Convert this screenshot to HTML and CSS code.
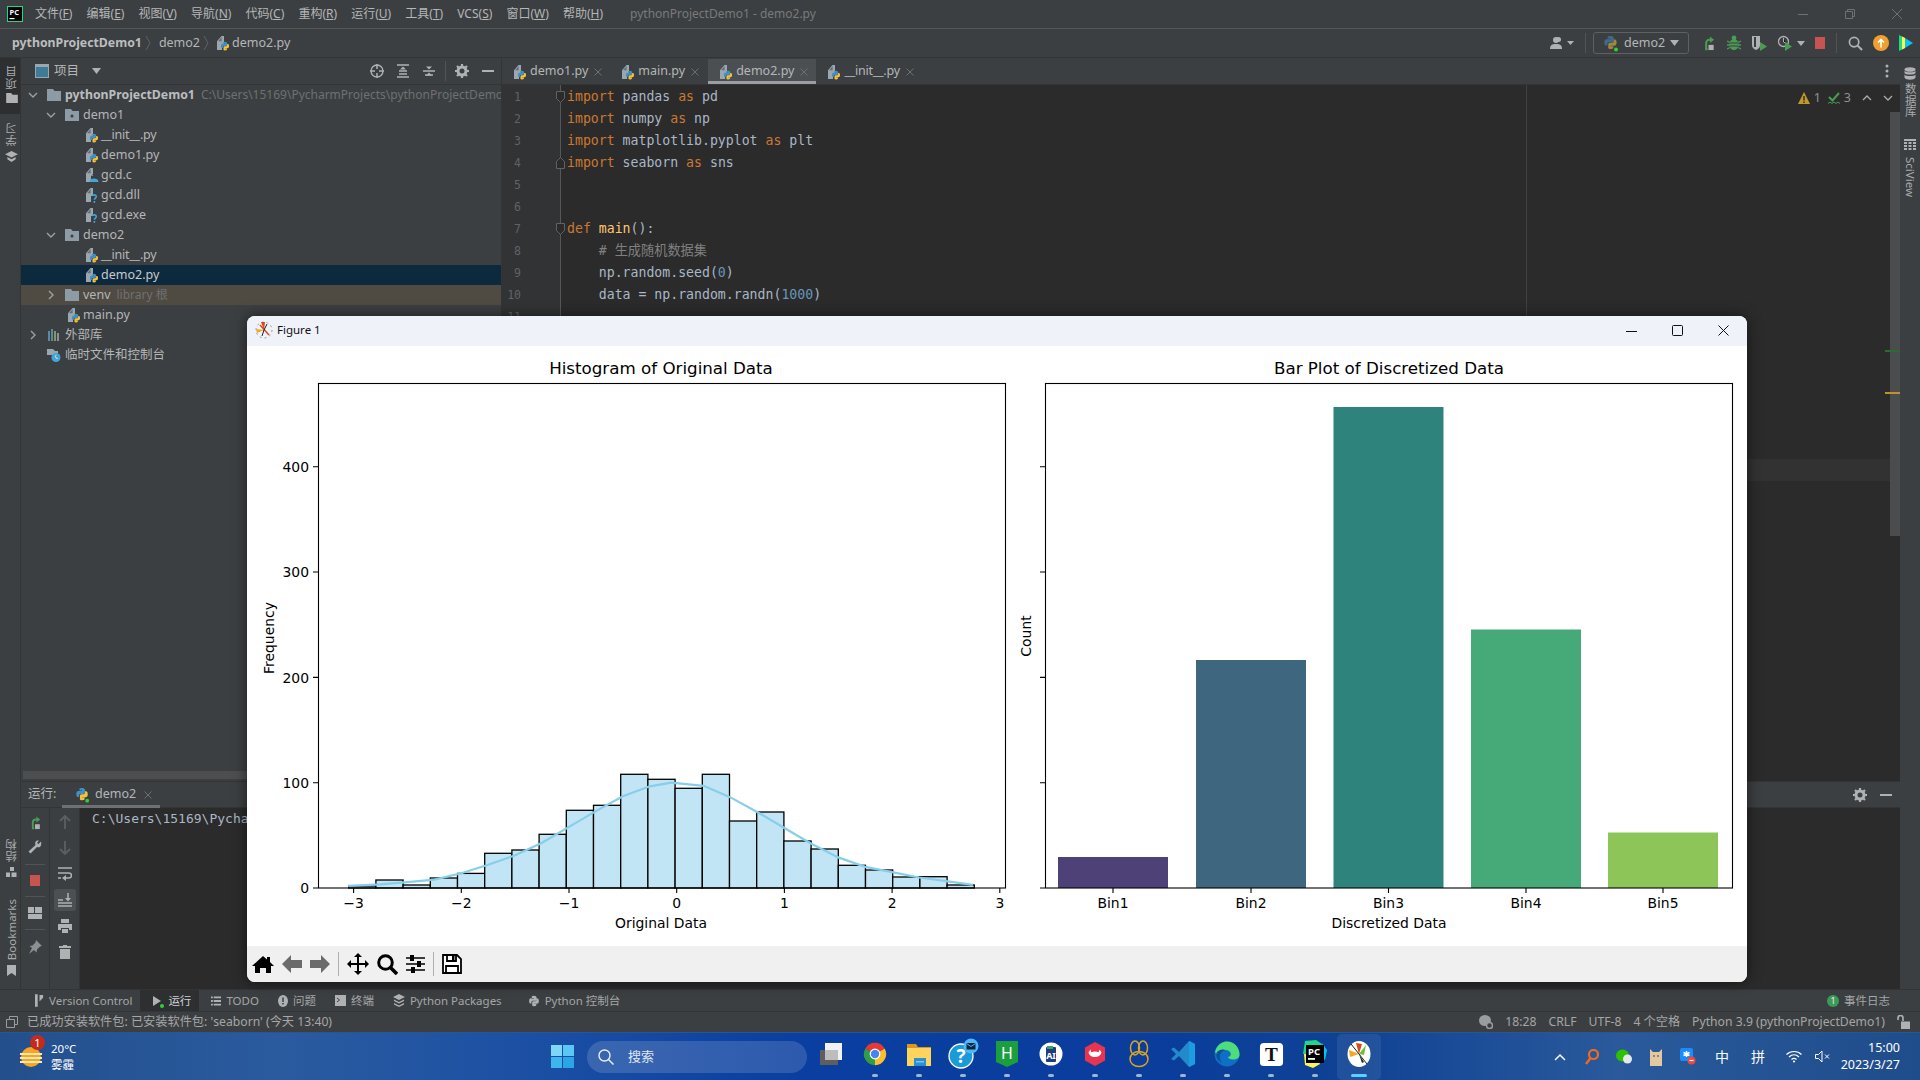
FILE: index.html
```html
<!DOCTYPE html>
<html lang="zh">
<head>
<meta charset="utf-8">
<title>pythonProjectDemo1 - demo2.py</title>
<link rel="stylesheet" href="styles.css">
</head>
<body>
<svg class="defs" width="0" height="0">
  <symbol id="pylogo" viewBox="0 0 16 16">
    <path fill="#3f8fc9" d="M7.9 1C4.8 1 5 2.3 5 2.3V4h3v.5H3.7S1.5 4.3 1.5 7.9s1.9 3.4 1.9 3.4h1.2V9.7s-.1-1.9 1.9-1.9h3.1s1.8 0 1.8-1.8V3S11 1 7.9 1z"/>
    <path fill="#f2c33b" d="M8.1 15c3.1 0 2.9-1.3 2.9-1.3V12H8v-.5h4.3s2.2.2 2.2-3.4-1.9-3.4-1.9-3.4h-1.2v1.6s.1 1.9-1.9 1.9H7.4s-1.8 0-1.8 1.8v3S5 15 8.1 15z"/>
  </symbol>
  <symbol id="doc" viewBox="0 0 14 16">
    <path fill="#9aa7b0" d="M1 6.2 5.5 1H8v8H6v6H1z"/>
    <path fill="#3c3f41" d="M5.6 2v4.2H2.2z" opacity=".55"/>
  </symbol>
  <symbol id="pyfile" viewBox="0 0 14 16">
    <use href="#doc" width="14" height="16"/>
    <use href="#pylogo" x="4" y="6" width="10" height="10"/>
  </symbol>
  <symbol id="cfile" viewBox="0 0 14 16">
    <use href="#doc" width="14" height="16"/>
    <circle cx="9" cy="9.500" r="2.400" fill="none" stroke="#3c3f41" stroke-width=".5"/>
    <path fill="#3fa7dc" d="M4.500 15c0-2.600 2-3.600 4.500-3.600s4.500 1 4.500 3.600z"/>
  </symbol>
  <symbol id="qfile" viewBox="0 0 14 16">
    <use href="#doc" width="14" height="16"/>
    <path fill="none" stroke="#3fa7dc" stroke-width="1.600" d="M7.300 9c.4-1.600 4-1.600 4 .5 0 1.600-1.900 1.500-1.900 3.300"/>
    <rect x="8.600" y="14" width="1.600" height="1.800" fill="#3fa7dc"/>
  </symbol>
  <symbol id="folder" viewBox="0 0 14 14">
    <path fill="#8d9ba6" d="M0 1h6l1.500 2H14v10H0z"/>
    <circle cx="7" cy="8" r="1.500" fill="#3c3f41"/>
  </symbol>
  <symbol id="folderplain" viewBox="0 0 14 14">
    <path fill="#8d9ba6" d="M0 1h6l1.500 2H14v10H0z"/>
  </symbol>
  <symbol id="down" viewBox="0 0 12 12"><path fill="none" stroke="#9da0a2" stroke-width="1.400" d="M2 4l4 4 4-4"/></symbol>
  <symbol id="right" viewBox="0 0 12 12"><path fill="none" stroke="#9da0a2" stroke-width="1.400" d="M4 2l4 4-4 4"/></symbol>
  <symbol id="x" viewBox="0 0 10 10"><path fill="none" stroke="#6d7072" stroke-width="1" d="M1.500 1.500l7 7M8.500 1.500l-7 7"/></symbol>
  <symbol id="rerun" viewBox="0 0 16 16">
    <path fill="none" stroke="#499c54" stroke-width="2.200" d="M7 14.500H5.500V8A3.500 3.500 0 0 1 9 4.500h1"/>
    <path fill="#499c54" d="M9.500 1v7l4.500-3.500z"/>
    <rect x="8" y="10" width="5.500" height="5.500" fill="#afb1b3"/>
  </symbol>
  <symbol id="play" viewBox="0 0 10 12"><path fill="#afb1b3" d="M1 1l8 5-8 5z"/></symbol>
</svg>

<div class="menubar">
  <svg class="pc-logo" viewBox="0 0 16 16" width="16" height="16"><rect x=".5" y=".5" width="15" height="15" fill="#000" stroke="#21d789"/><text x="2.500" y="8.500" class="pc-t">PC</text><rect x="2.500" y="12" width="5" height="1.200" fill="#fff"/></svg>
  <nav class="menu">
    <span>文件(<u>F</u>)</span><span>编辑(<u>E</u>)</span><span>视图(<u>V</u>)</span><span>导航(<u>N</u>)</span><span>代码(<u>C</u>)</span><span>重构(<u>R</u>)</span><span>运行(<u>U</u>)</span><span>工具(<u>T</u>)</span><span>VCS(<u>S</u>)</span><span>窗口(<u>W</u>)</span><span>帮助(<u>H</u>)</span>
  </nav>
  <span class="app-title">pythonProjectDemo1 - demo2.py</span>
  <div class="winctl">
    <svg viewBox="0 0 12 12" width="12" height="12"><path stroke="#6e7072" d="M1 6.500h10"/></svg>
    <svg viewBox="0 0 12 12" width="12" height="12"><path fill="none" stroke="#6e7072" d="M1.500 3.500h7v7h-7zM3.500 3.500v-2h7v7h-2"/></svg>
    <svg viewBox="0 0 12 12" width="12" height="12"><path stroke="#6e7072" d="M1 1l10 10M11 1L1 11"/></svg>
  </div>
</div>

<div class="navbar">
  <b class="crumb-root">pythonProjectDemo1</b>
  <svg class="crumb-sep" viewBox="0 0 6 16" width="6" height="16"><path fill="none" stroke="#5f6264" d="M1 1l4 7-4 7"/></svg>
  <span>demo2</span>
  <svg class="crumb-sep sep2" viewBox="0 0 6 16" width="6" height="16"><path fill="none" stroke="#5f6264" d="M1 1l4 7-4 7"/></svg>
  <svg class="ficon tall" width="14" height="16"><use href="#pyfile"/></svg>
  <span class="crumb-file">demo2.py</span>
  <div class="nav-right">
    <svg viewBox="0 0 24 14" width="24" height="14"><circle cx="6" cy="4" r="3" fill="#afb1b3"/><path fill="#afb1b3" d="M0 13c0-4 2-5 6-5s6 1 6 5z"/><circle cx="8.500" cy="3.500" r="2.500" fill="#afb1b3"/><path fill="#afb1b3" d="M17 5h7l-3.500 4z"/></svg>
    <i class="nav-sep"></i>
    <div class="runcfg">
      <svg width="16" height="17" viewBox="0 0 16 17"><use href="#pylogo" width="15" height="15" opacity=".55"/><circle cx="13" cy="14.500" r="2" fill="#2bd62b"/></svg>
      <span>demo2</span>
      <svg width="9" height="6" viewBox="0 0 9 6"><path fill="#afb1b3" d="M0 0h9L4.500 6z"/></svg>
    </div>
    <svg class="tool-run" width="15" height="16"><use href="#rerun"/></svg>
    <svg class="tool-bug" viewBox="0 0 14 16" width="14" height="16"><ellipse cx="7" cy="9.500" rx="4.500" ry="5.500" fill="#499c54"/><circle cx="7" cy="3" r="2.400" fill="#499c54"/><path stroke="#499c54" stroke-width="1.300" d="M0 6l3 1.500M14 6l-3 1.500M0 10h3M14 10h-3M0 14l3-1.500M14 14l-3-1.500"/><path stroke="#3c3f41" d="M3 8h8M3 11h8"/></svg>
    <svg viewBox="0 0 16 16" width="16" height="16"><path fill="#afb1b3" d="M1 1h8v9c0 3-2 4-4 5-2-1-4-2-4-5z"/><path fill="#3c3f41" d="M5 2v10H3V2z"/><path fill="#499c54" d="M9 7l7 4.500L9 16z"/></svg>
    <svg viewBox="0 0 16 16" width="16" height="16"><circle cx="6.500" cy="6.500" r="5" fill="none" stroke="#afb1b3" stroke-width="1.300"/><path stroke="#afb1b3" d="M6.500 3v4l2 1"/><path fill="#499c54" d="M8 7l7 4.500L8 16z"/></svg>
    <svg class="tiny-arrow" viewBox="0 0 8 5" width="8" height="5"><path fill="#afb1b3" d="M0 0h8L4 5z"/></svg>
    <i class="stop"></i>
    <i class="nav-sep"></i>
    <svg viewBox="0 0 16 16" width="15" height="15"><circle cx="6.500" cy="6.500" r="5" fill="none" stroke="#afb1b3" stroke-width="1.800"/><path stroke="#afb1b3" stroke-width="2.200" d="M10 10l5 5"/></svg>
    <svg viewBox="0 0 16 16" width="16" height="16"><circle cx="8" cy="8" r="8" fill="#f0a030"/><path fill="none" stroke="#fff" stroke-width="1.600" d="M8 12.500V5M5 7.500L8 4.500l3 3"/></svg>
    <svg viewBox="0 0 14 16" width="14" height="16"><path fill="#21d789" d="M0 0l6 3v10l-6 3z"/><path fill="#fcf84a" d="M3 1.500l3 1.500v10l-3 1.500z"/><path fill="#07c3f2" d="M6 3l8 5-8 5z"/></svg>
  </div>
</div>

<div class="workspace">
  <aside class="rail-left">
    <div class="rail-active">
      <span class="vt">项目</span>
      <svg width="12" height="10" viewBox="0 0 14 12"><path fill="#afb1b3" d="M0 0h6l1.500 2H14v10H0z"/></svg>
    </div>
    <div class="rail-item">
      <span class="vt">学习</span>
      <svg width="13" height="11" viewBox="0 0 14 12"><path fill="#afb1b3" d="M7 0l7 3.500L7 7 0 3.500z"/><path fill="#afb1b3" d="M2.500 6.500L7 9l4.500-2.500V9L7 12 2.500 9z"/></svg>
    </div>
    <div class="rail-bottom">
      <div class="rail-item">
        <span class="vt">结构</span>
        <svg width="11" height="10" viewBox="0 0 11 10"><rect x="4" width="4" height="4" fill="#afb1b3"/><rect y="5.500" width="4" height="4.500" fill="#afb1b3"/><rect x="5.500" y="5.500" width="5" height="4.500" fill="#afb1b3"/></svg>
      </div>
      <div class="rail-item rail-bm">
        <span class="vt">Bookmarks</span>
        <svg width="9" height="11" viewBox="0 0 9 11"><path fill="#afb1b3" d="M0 0h9v11L4.500 8 0 11z"/></svg>
      </div>
    </div>
  </aside>

  <main class="center">
    <div class="upper">
      <section class="project">
        <div class="proj-head">
          <svg class="proj-ico" width="14" height="14" viewBox="0 0 14 14"><rect x=".5" y=".5" width="13" height="13" fill="#3d7c99" stroke="#9aa7b0"/><rect x="1" y="1" width="12" height="2" fill="#9aa7b0"/></svg>
          <span class="proj-label">项目</span>
          <svg class="proj-tri" width="9" height="6" viewBox="0 0 9 6"><path fill="#afb1b3" d="M0 0h9L4.500 6z"/></svg>
          <div class="proj-tools">
            <svg viewBox="0 0 14 14" width="14" height="14"><circle cx="7" cy="7" r="6" fill="none" stroke="#afb1b3" stroke-width="1.300"/><path stroke="#afb1b3" stroke-width="1.500" d="M7 0v5M7 9v5M0 7h5M9 7h5"/></svg>
            <svg viewBox="0 0 14 14" width="14" height="14"><path stroke="#afb1b3" stroke-width="1.300" d="M1 1h12M1 13h12M3 7h8M3 10h8"/><path fill="#afb1b3" d="M7 2.500l3 3H4z"/></svg>
            <svg viewBox="0 0 14 14" width="14" height="14"><path stroke="#afb1b3" stroke-width="1.300" d="M1 7h12M3 11h8"/><path fill="#afb1b3" d="M7 5.500l-3-3h6zM7 8.500l3 3H4z"/></svg>
            <i class="nav-sep"></i>
            <svg viewBox="0 0 14 14" width="14" height="14"><circle cx="7" cy="7" r="4" fill="none" stroke="#afb1b3" stroke-width="3"/><path stroke="#afb1b3" stroke-width="2.200" d="M7 0v3M7 11v3M0 7h3M11 7h3M2 2l2 2M10 10l2 2M12 2l-2 2M4 10l-2 2"/></svg>
            <svg viewBox="0 0 14 14" width="14" height="14"><path stroke="#afb1b3" stroke-width="2" d="M1 7h12"/></svg>
          </div>
        </div>
        <div class="tree">
          <div class="row l0"><svg class="chev"><use href="#down"/></svg><svg class="ficon"><use href="#folderplain"/></svg><b>pythonProjectDemo1</b><span class="path">C:\Users\15169\PycharmProjects\pythonProjectDemo1</span></div>
          <div class="row l1"><svg class="chev"><use href="#down"/></svg><svg class="ficon"><use href="#folder"/></svg><span>demo1</span></div>
          <div class="row l2"><svg class="ficon tall"><use href="#pyfile"/></svg><span class="tight">__init__.py</span></div>
          <div class="row l2"><svg class="ficon tall"><use href="#pyfile"/></svg><span>demo1.py</span></div>
          <div class="row l2"><svg class="ficon tall"><use href="#cfile"/></svg><span>gcd.c</span></div>
          <div class="row l2"><svg class="ficon tall"><use href="#qfile"/></svg><span>gcd.dll</span></div>
          <div class="row l2"><svg class="ficon tall"><use href="#qfile"/></svg><span>gcd.exe</span></div>
          <div class="row l1"><svg class="chev"><use href="#down"/></svg><svg class="ficon"><use href="#folder"/></svg><span>demo2</span></div>
          <div class="row l2"><svg class="ficon tall"><use href="#pyfile"/></svg><span class="tight">__init__.py</span></div>
          <div class="row l2 selected"><svg class="ficon tall"><use href="#pyfile"/></svg><span>demo2.py</span></div>
          <div class="row l1 library"><svg class="chev"><use href="#right"/></svg><svg class="ficon"><use href="#folderplain"/></svg><span>venv</span><span class="path">library 根</span></div>
          <div class="row l1b"><svg class="ficon tall"><use href="#pyfile"/></svg><span>main.py</span></div>
          <div class="row l0"><svg class="chev"><use href="#right"/></svg><svg class="ficon" viewBox="0 0 14 14"><path stroke="#6a9bb5" stroke-width="1.600" d="M2 3v10M5 1v12"/><path stroke="#8fb36a" stroke-width="1.600" d="M8 3v10"/><path stroke="#9aa7b0" stroke-width="1.600" d="M11 5v8"/></svg><span>外部库</span></div>
          <div class="row nochev"><svg class="ficon" viewBox="0 0 14 14"><path fill="#9aa7b0" d="M0 1h6l2 2h3v4H0z"/><circle cx="9" cy="9.500" r="4.500" fill="#3fa7dc"/><path stroke="#fff" d="M9 7v3h2"/></svg><span>临时文件和控制台</span></div>
        </div>
        <div class="hscroll"></div>
      </section>

      <section class="editor">
        <div class="tabs">
          <div class="tab"><svg class="ficon tall"><use href="#pyfile"/></svg><span>demo1.py</span><svg class="tab-x"><use href="#x"/></svg></div>
          <div class="tab"><svg class="ficon tall"><use href="#pyfile"/></svg><span>main.py</span><svg class="tab-x"><use href="#x"/></svg></div>
          <div class="tab active"><svg class="ficon tall"><use href="#pyfile"/></svg><span>demo2.py</span><svg class="tab-x"><use href="#x"/></svg></div>
          <div class="tab"><svg class="ficon tall"><use href="#pyfile"/></svg><span class="tight">__init__.py</span><svg class="tab-x"><use href="#x"/></svg></div>
          <svg class="kebab" viewBox="0 0 4 14" width="4" height="14"><circle cx="2" cy="2" r="1.500" fill="#afb1b3"/><circle cx="2" cy="7" r="1.500" fill="#afb1b3"/><circle cx="2" cy="12" r="1.500" fill="#afb1b3"/></svg>
        </div>
        <div class="edit-body">
          <div class="gutter">
            <div>1<svg class="fold" viewBox="0 0 9 12"><path fill="#2b2b2b" stroke="#606366" d="M.5 .5h8v7l-4 4-4-4z"/></svg></div>
            <div>2</div><div>3</div>
            <div>4<svg class="fold" viewBox="0 0 9 12"><path fill="#2b2b2b" stroke="#606366" d="M.5 11.500h8v-7l-4-4-4 4z"/></svg></div>
            <div>5</div><div>6</div>
            <div>7<svg class="fold" viewBox="0 0 9 12"><path fill="#2b2b2b" stroke="#606366" d="M.5 .5h8v7l-4 4-4-4z"/></svg></div>
            <div>8</div><div>9</div><div>10</div><div>11</div>
          </div>
          <div class="code">
            <div><em>import</em> pandas <em>as</em> pd</div>
            <div><em>import</em> numpy <em>as</em> np</div>
            <div><em>import</em> matplotlib.pyplot <em>as</em> plt</div>
            <div><em>import</em> seaborn <em>as</em> sns</div>
            <div>&nbsp;</div>
            <div>&nbsp;</div>
            <div><em>def</em> <span class="fn">main</span>():</div>
            <div class="c">    # 生成随机数据集</div>
            <div>    np.random.seed(<span class="num">0</span>)</div>
            <div>    data = np.random.randn(<span class="num">1000</span>)</div>
          </div>
          <i class="guide"></i>
          <i class="caret-row"></i>
          <i class="vscroll"></i>
          <i class="mark-g"></i>
          <i class="mark-o"></i>
          <div class="inspect">
            <svg viewBox="0 0 12 12" width="12" height="12"><path fill="#c09a28" d="M6 0l6 12H0z"/><path stroke="#2b2b2b" stroke-width="1.400" d="M6 4v4.500M6 9.500v1.500"/></svg><span>1</span>
            <svg class="chk" viewBox="0 0 12 12" width="12" height="12"><path fill="none" stroke="#499c54" stroke-width="2" d="M1 5l3.500 3.500L11 1"/><path fill="none" stroke="#499c54" d="M0 11.500l2-1.500 2 1.500 2-1.500 2 1.500 2-1.500 2 1.500"/></svg><span>3</span>
            <svg class="arr" viewBox="0 0 10 6" width="10" height="6"><path fill="none" stroke="#a9abad" stroke-width="1.300" d="M1 5l4-4 4 4"/></svg>
            <svg class="arr" viewBox="0 0 10 6" width="10" height="6"><path fill="none" stroke="#a9abad" stroke-width="1.300" d="M1 1l4 4 4-4"/></svg>
          </div>
        </div>
      </section>
    </div>

    <section class="run">
      <div class="run-head">
        <span class="run-label">运行:</span>
        <div class="run-tab"><svg width="15" height="16" viewBox="0 0 16 17"><use href="#pylogo" width="15" height="15"/><circle cx="13" cy="14.500" r="2" fill="#2bd62b"/></svg><span>demo2</span><svg class="tab-x"><use href="#x"/></svg></div>
        <div class="run-tools">
          <svg viewBox="0 0 14 14" width="14" height="14"><circle cx="7" cy="7" r="4" fill="none" stroke="#afb1b3" stroke-width="3"/><path stroke="#afb1b3" stroke-width="2.200" d="M7 0v3M7 11v3M0 7h3M11 7h3M2 2l2 2M10 10l2 2M12 2l-2 2M4 10l-2 2"/></svg>
          <svg viewBox="0 0 14 14" width="14" height="14"><path stroke="#afb1b3" stroke-width="2" d="M1 7h12"/></svg>
        </div>
      </div>
      <div class="run-body">
        <div class="run-strip s1">
          <svg width="14" height="15"><use href="#rerun"/></svg>
          <svg viewBox="0 0 14 14" width="14" height="14"><path fill="#afb1b3" d="M13 1.500L10.500 4 9 3l2-2.500C8 0 6.500 2 7.500 5L.5 11.500 2.500 13.500 9 7c3 1 5-1 4-5.500z"/></svg>
          <i class="strip-sep"></i>
          <i class="stop"></i>
          <i class="strip-sep"></i>
          <svg viewBox="0 0 14 12" width="14" height="12"><path fill="#afb1b3" d="M0 0h6v6H0zM7 0h7v6H7zM0 7h14v5H0z"/></svg>
          <i class="strip-sep"></i>
          <svg viewBox="0 0 14 14" width="14" height="14"><path fill="#8d8f91" d="M8 0l6 6-2 .5-3 3-.5 3L6 10 1 14 4 8 1.500 6l3-.5 3-3z"/></svg>
        </div>
        <div class="run-strip s2">
          <svg class="dim" viewBox="0 0 12 14" width="12" height="14"><path fill="none" stroke="#5c5f61" stroke-width="1.800" d="M6 14V2M1 6l5-5 5 5"/></svg>
          <svg class="dim" viewBox="0 0 12 14" width="12" height="14"><path fill="none" stroke="#5c5f61" stroke-width="1.800" d="M6 0v12M1 8l5 5 5-5"/></svg>
          <svg viewBox="0 0 14 14" width="14" height="14"><path fill="none" stroke="#afb1b3" stroke-width="1.500" d="M0 1h14M0 6h11a2.500 2.500 0 0 1 0 5H7M0 11h3"/><path fill="#afb1b3" d="M8 8v6l-4-3z"/></svg>
          <div class="hl"><svg viewBox="0 0 14 14" width="14" height="14"><path stroke="#afb1b3" stroke-width="1.500" d="M0 7h5M0 10h14M0 13h14M10 0v7"/><path fill="#afb1b3" d="M7 5h6l-3 3.500z"/></svg></div>
          <svg viewBox="0 0 14 14" width="14" height="14"><path fill="#afb1b3" d="M3 0h8v4H3zM0 5h14v6h-3V9H3v2H0zM4 10h6v4H4z"/></svg>
          <svg viewBox="0 0 12 14" width="12" height="14"><path fill="#afb1b3" d="M4 0h4v1h4v2H0V1h4zM1 4h10v10H1z"/></svg>
        </div>
        <div class="console">C:\Users\15169\PycharmProjects\pythonProjectDemo1\venv\Scripts\python.exe</div>
      </div>
    </section>
  </main>

  <aside class="rail-right">
    <svg width="12" height="13" viewBox="0 0 12 13"><ellipse cx="6" cy="2.500" rx="5.500" ry="2.300" fill="#afb1b3"/><path fill="#afb1b3" d="M.5 3.800c1 2 10 2 11 0v2.200c-1 2-10 2-11 0zM.5 7.500c1 2 10 2 11 0v3c-1 3-10 3-11 0z"/></svg>
    <span class="vtr">数据库</span>
    <svg class="sci-ico" width="12" height="11" viewBox="0 0 12 11"><path fill="#afb1b3" d="M0 0h12v2H0zM0 3h3v2H0zM4.500 3h3v2h-3zM9 3h3v2H9zM0 6h3v2H0zM4.500 6h3v2h-3zM9 6h3v2H9zM0 9h3v2H0zM4.500 9h3v2h-3zM9 9h3v2H9z"/></svg>
    <span class="vtr sci">SciView</span>
  </aside>
</div>

<div class="toolbar">
  <div class="tw vc"><svg viewBox="0 0 10 14" width="9" height="13"><path fill="#afb1b3" d="M0 0h3v14H0zM5 1h4v3L5 8z"/></svg><span>Version Control</span></div>
  <div class="tw active"><svg width="10" height="12"><use href="#play"/></svg><i class="dot"></i><span>运行</span></div>
  <div class="tw"><svg viewBox="0 0 11 10" width="10" height="10"><path fill="#afb1b3" d="M0 0h2v2H0zM3 0h8v2H3zM0 4h2v2H0zM3 4h8v2H3zM0 8h2v2H0zM3 8h8v2H3z"/></svg><span>TODO</span></div>
  <div class="tw"><svg viewBox="0 0 10 12" width="10" height="12"><ellipse cx="5" cy="6" rx="5" ry="6" fill="#afb1b3"/><path stroke="#3c3f41" stroke-width="1.500" d="M5 2.500V7M5 8v1.500"/></svg><span>问题</span></div>
  <div class="tw"><svg viewBox="0 0 11 11" width="11" height="11"><rect width="11" height="11" fill="#afb1b3"/><path fill="none" stroke="#3c3f41" d="M2 3l2.500 2L2 7"/></svg><span>终端</span></div>
  <div class="tw"><svg viewBox="0 0 12 13" width="12" height="13"><path fill="#afb1b3" d="M6 0l6 3-6 3-6-3zM1 5.500l5 2.500 5-2.500V7L6 9.500 1 7zM1 9l5 2.500L11 9v1.500L6 13l-5-2.500z"/></svg><span>Python Packages</span></div>
  <div class="tw last"><svg viewBox="0 0 16 16" width="12" height="12"><path fill="#afb1b3" d="M7.900 1C4.800 1 5 2.300 5 2.300V4h3v.5H3.700S1.500 4.300 1.500 7.900s1.900 3.400 1.900 3.400h1.200V9.700s-.1-1.900 1.900-1.900h3.100s1.800 0 1.800-1.800V3S11 1 7.900 1zM8.100 15c3.100 0 2.900-1.300 2.900-1.300V12H8v-.5h4.300s2.200.2 2.200-3.400-1.900-3.400-1.900-3.400h-1.200v1.600s.1 1.900-1.900 1.900H7.400s-1.800 0-1.800 1.800v3S5 15 8.100 15z"/></svg><span>Python 控制台</span></div>
  <div class="tw events"><i class="badge-g">1</i><span>事件日志</span></div>
</div>

<div class="statusbar">
  <svg viewBox="0 0 12 12" width="12" height="12"><path fill="none" stroke="#9a9c9e" d="M3.500 3V.5h8v8H9M.5 3.500h8v8h-8z"/></svg>
  <span class="st-msg">已成功安装软件包: 已安装软件包: 'seaborn' (今天 13:40)</span>
  <div class="st-right">
    <svg viewBox="0 0 14 14" width="14" height="14"><ellipse cx="6" cy="5.500" rx="6" ry="5.500" fill="#9a9c9e"/><circle cx="10.500" cy="10.500" r="3" fill="#3c3f41" stroke="#9a9c9e" stroke-width="1.500"/></svg>
    <span>18:28</span><span>CRLF</span><span>UTF-8</span><span>4 个空格</span><span>Python 3.9 (pythonProjectDemo1)</span>
    <svg viewBox="0 0 13 14" width="13" height="14"><path fill="none" stroke="#afb1b3" stroke-width="1.600" d="M1 5V3a2.500 2.500 0 0 1 5 0v3"/><rect x="4" y="6.500" width="9" height="7.500" fill="#afb1b3"/></svg>
  </div>
</div>

<footer class="taskbar">
  <div class="weather">
    <svg class="sun" viewBox="0 0 22 22" width="22" height="22"><circle cx="11" cy="11" r="10" fill="#f6a623"/><path stroke="#fde9b0" stroke-width="1.800" d="M0 8h22M0 12h22M0 16h22"/></svg>
    <i class="wbadge">1</i>
    <div class="wtext"><span>20°C</span><span>雾霾</span></div>
  </div>
  <svg class="start" viewBox="0 0 23 23" width="23" height="23"><path fill="#7fd6f7" d="M0 0h11v11H0z"/><path fill="#5cc6f4" d="M12 0h11v11H12z"/><path fill="#3fb5ee" d="M0 12h11v11H0z"/><path fill="#2aa6e8" d="M12 12h11v11H12z"/></svg>
  <div class="search">
    <svg viewBox="0 0 16 16" width="16" height="16"><circle cx="6.500" cy="6.500" r="5.500" fill="none" stroke="#e8eef6" stroke-width="1.400"/><path stroke="#e8eef6" stroke-width="1.500" d="M10.500 10.500l5 5"/></svg>
    <span>搜索</span>
  </div>
  <div class="apps">
    <div class="app nodot"><svg viewBox="0 0 24 24" width="24" height="24"><rect x="6" y="1" width="17" height="17" fill="#f2f2f2"/><rect x="1" y="8" width="18" height="15" fill="#5e5e5e"/><rect x="6" y="8" width="13" height="10" fill="#bdbdbd"/></svg></div>
    <div class="app"><svg viewBox="0 0 28 28" width="26" height="26"><path fill="#2f9e44" d="M14 14L3.600 8A12 12 0 0 0 14 26z"/><path fill="#fbc02d" d="M14 14l0 12A12 12 0 0 0 24.400 8z"/><path fill="#e53935" d="M14 14l10.400-6A12 12 0 0 0 3.600 8z"/><circle cx="14" cy="14" r="5.800" fill="#fff"/><circle cx="14" cy="14" r="4.500" fill="#4285f4"/></svg></div>
    <div class="app"><svg viewBox="0 0 26 26" width="26" height="26"><path fill="#d99a1c" d="M1 3h9l2 3h13v4H1z"/><path fill="#ffd45c" d="M1 7h24v18H1z"/><rect x="8" y="17" width="12" height="8" fill="#2b8fd6"/><rect x="10" y="20" width="8" height="1.500" fill="#7cc4f0"/></svg></div>
    <div class="app"><svg viewBox="0 0 32 32" width="32" height="32"><circle cx="14" cy="18" r="12" fill="#1a9ad6" stroke="#fff" stroke-width="1.300"/><text x="14" y="25" class="q-t">?</text><circle cx="24" cy="8" r="7.500" fill="#4db8f5"/><rect x="19.500" y="5" width="9" height="6.500" fill="#10253f"/><path fill="none" stroke="#4db8f5" d="M19.500 5.500l4.500 3 4.500-3"/></svg></div>
    <div class="app"><svg viewBox="0 0 24 28" width="24" height="28"><path fill="#1b9e3e" d="M1 1h22v21l-11 5-11-5z"/><text x="12" y="19" class="h-t">H</text></svg></div>
    <div class="app"><svg viewBox="0 0 24 24" width="24" height="24"><circle cx="12" cy="12" r="11.500" fill="#fff"/><rect x="7" y="5" width="10" height="15" rx="1" fill="#1f3f7a"/><rect x="8" y="4" width="6" height="3" fill="#38a169"/><text x="12" y="17" class="ai-t">AI</text></svg></div>
    <div class="app"><svg viewBox="0 0 24 26" width="22" height="26"><path fill="#e8344e" d="M12 0l11 6v14l-11 6-11-6V6z"/><path fill="#fff" d="M5 11c1 7 13 7 14 0l-2-3-1 3c-2-1-6-1-8 0L7 8z"/></svg></div>
    <div class="app"><svg viewBox="0 0 24 28" width="24" height="28"><g fill="none" stroke="#d9a520" stroke-width="1.500"><ellipse cx="8" cy="8" rx="4.500" ry="7"/><ellipse cx="16" cy="8" rx="4.500" ry="7"/><ellipse cx="12" cy="19" rx="9" ry="7.500"/></g></svg></div>
    <div class="app"><svg viewBox="0 0 26 28" width="26" height="28"><path fill="#2489ca" d="M1 9l3-1.500 5 4.500L19 1l6 3v20l-6 3L9 16l-5 4.500L1 19l5-5z"/><path fill="#1b9de2" d="M19 1l6 3v20l-6 3z"/></svg></div>
    <div class="app"><svg viewBox="0 0 26 26" width="26" height="26"><circle cx="13" cy="13" r="12.500" fill="#0f6fc5"/><path fill="#4fdc7b" d="M1 11C3 3 9 .5 13 .5 20 .5 25.500 6 25.500 14c0 3-3 4.500-6.500 4.500-3 0-5-1-5-2.500 5-1 3-7-2.500-7C6.500 9 4 11 3 14z"/><path fill="#0c4f9c" d="M11 9c-5 1-7 8-3 13-5-3-7-8-5-11 2-2 5-3 8-2z"/></svg></div>
    <div class="app"><svg viewBox="0 0 26 26" width="25" height="25"><rect x="1" y="1" width="24" height="24" rx="4" fill="#fff"/><text x="13" y="20" class="t-t">T</text></svg></div>
    <div class="app"><svg viewBox="0 0 26 28" width="26" height="28"><path fill="#21d789" d="M3 1l11-1 6 4-6 8L1 14z"/><path fill="#fcf84a" d="M2 14l10-2 6 12-7 4-8-3z"/><path fill="#07c3f2" d="M20 3l5 7-2 10-6-4z"/><rect x="4" y="5" width="18" height="18" fill="#000"/><text x="6" y="15" class="pc-b">PC</text><rect x="6" y="18" width="7" height="1.800" fill="#fff"/></svg></div>
    <div class="app current"><svg viewBox="0 0 24 28" width="24" height="28"><ellipse cx="12" cy="14" rx="11.500" ry="13" fill="#fff"/><path fill="#f5a623" d="M2 10l10 4-9 3z"/><path fill="#d9481c" d="M9 3l3 11 3-10z"/><path fill="#6fbf3b" d="M19 5l-7 9 5 1z"/><path fill="#222" d="M12 14l5 8-2 1z"/><path stroke="#222" d="M4 4l16 20"/></svg></div>
  </div>
  <div class="tray">
    <div class="ti"><svg viewBox="0 0 12 8" width="12" height="8"><path fill="none" stroke="#fff" stroke-width="1.500" d="M1 7l5-5 5 5"/></svg></div>
    <div class="ti"><svg viewBox="0 0 14 16" width="14" height="16"><circle cx="8.500" cy="5.500" r="4.500" fill="none" stroke="#f26a1b" stroke-width="2.200"/><path stroke="#f26a1b" stroke-width="2.400" d="M5.500 9L1 15"/></svg></div>
    <div class="ti"><svg viewBox="0 0 16 15" width="16" height="15"><ellipse cx="6.500" cy="6.500" rx="6.500" ry="6" fill="#2dc100"/><circle cx="11.500" cy="10" r="4.500" fill="#e8e8e8"/></svg></div>
    <div class="ti"><svg viewBox="0 0 16 18" width="16" height="18"><path fill="#e3c8a0" d="M2 1l3 3h6l3-3v17H2z"/><circle cx="6" cy="8" r=".8" fill="#333"/><circle cx="10" cy="8" r=".8" fill="#333"/></svg></div>
    <div class="ti"><svg viewBox="0 0 16 17" width="16" height="17"><rect width="13" height="13" rx="2" fill="#1a8cff"/><path stroke="#fff" stroke-width="1.500" d="M6.500 3v6M3.500 4.500l6 3M9.500 4.500l-6 3"/><circle cx="11.500" cy="12.500" r="4" fill="#e84a3c"/><path stroke="#fff" stroke-width="1.200" d="M9.500 12.500h4"/></svg></div>
    <div class="ti tx">中</div>
    <div class="ti tx">拼</div>
    <div class="ti wifi"><svg viewBox="0 0 16 13" width="16" height="13"><path fill="none" stroke="#fff" stroke-width="1.200" d="M.5 4.500c4-4 11-4 15 0M3 7c3-2.800 7-2.800 10 0M5.500 9.500c1.500-1.300 3.500-1.300 5 0"/><circle cx="8" cy="11.500" r="1.100" fill="#fff"/></svg></div>
    <div class="ti vol"><svg viewBox="0 0 16 13" width="16" height="13"><path fill="none" stroke="#fff" d="M.5 4.500h3L7 1v11L3.500 8.500h-3z"/><path stroke="#fff" d="M10 4.500l4 4M14 4.500l-4 4"/></svg></div>
  </div>
  <div class="clock"><span>15:00</span><span>2023/3/27</span></div>
</footer>

<div class="figure">
  <div class="fig-title">
    <svg viewBox="0 0 18 18" width="18" height="18"><circle cx="9" cy="9" r="8" fill="none" stroke="#999" stroke-dasharray="2 3"/><path fill="#f5a623" d="M1 8l8 1-7 3z"/><path fill="#d9481c" d="M6 1l3 8 1-8z"/><path stroke="#d9481c" stroke-width="1.500" d="M5 4l9 10"/><path stroke="#222" d="M9 9l3-6M9 9l-2 6"/></svg>
    <span>Figure 1</span>
    <div class="fig-ctl">
      <svg viewBox="0 0 11 11" width="11" height="11"><path stroke="#111" d="M0 6.500h11"/></svg>
      <svg viewBox="0 0 11 11" width="11" height="11"><rect x=".5" y=".5" width="10" height="10" rx="1" fill="none" stroke="#111"/></svg>
      <svg viewBox="0 0 11 11" width="11" height="11"><path stroke="#111" d="M.5 .5l10 10M10.500 .5l-10 10"/></svg>
    </div>
  </div>
  <svg class="plot" viewBox="247 346 1500 600" width="1500" height="600">
    <!-- Histogram -->
    <g class="bars">
      <rect x="348.7" y="886" width="27.2" height="2"/><rect x="375.9" y="880" width="27.2" height="8"/><rect x="403.1" y="885" width="27.2" height="3"/><rect x="430.3" y="878" width="27.2" height="10"/><rect x="457.5" y="873.4" width="27.2" height="14.6"/><rect x="484.7" y="853.3" width="27.2" height="34.7"/><rect x="511.9" y="850" width="27.2" height="38"/><rect x="539.1" y="834.3" width="27.2" height="53.7"/><rect x="566.3" y="810.3" width="27.2" height="77.7"/><rect x="593.5" y="805.3" width="27.2" height="82.7"/><rect x="620.7" y="774.3" width="27.2" height="113.7"/><rect x="647.9" y="779.3" width="27.2" height="108.7"/><rect x="675.1" y="788.3" width="27.2" height="99.7"/><rect x="702.3" y="774.3" width="27.2" height="113.7"/><rect x="729.5" y="821" width="27.2" height="67"/><rect x="756.7" y="812" width="27.2" height="76"/><rect x="783.9" y="841" width="27.2" height="47"/><rect x="811.1" y="849" width="27.2" height="39"/><rect x="838.3" y="865.3" width="27.2" height="22.7"/><rect x="865.5" y="870" width="27.2" height="18"/><rect x="892.7" y="877" width="27.2" height="11"/><rect x="919.9" y="876.7" width="27.2" height="11.3"/><rect x="947.1" y="885" width="27.2" height="3"/>
    </g>
    <polyline class="kde" points="348.2,885.9 380.5,884.3 407.500,882.2 434.4,879.6 461.3,873.3 488.2,864.8 515.2,855.3 542.1,842.7 569,826.9 595.9,811.1 622.9,796.3 649.8,786.3 671.3,782.7 703.6,785.8 730.6,797.4 757.5,812.2 784.4,828 811.3,843.8 838.3,857.4 865.2,866.9 892.1,872.2 919,877.5 946,881.2 972.9,884.8"/>
    <rect class="spine" x="318.500" y="383.500" width="687" height="504.500"/>
    <path class="tick" d="M353.600 888v5M461.300 888v5M569 888v5M676.700 888v5M784.400 888v5M892.100 888v5M999.800 888v5M313 888h5M313 782.700h5M313 677.400h5M313 572h5M313 466.700h5"/>
    <g class="lbl">
      <text x="353.600" y="908" class="mid">−3</text><text x="461.300" y="908" class="mid">−2</text><text x="569" y="908" class="mid">−1</text><text x="676.700" y="908" class="mid">0</text><text x="784.400" y="908" class="mid">1</text><text x="892.100" y="908" class="mid">2</text><text x="999.800" y="908" class="mid">3</text>
      <text x="309" y="893" class="end">0</text><text x="309" y="788" class="end">100</text><text x="309" y="682.500" class="end">200</text><text x="309" y="577" class="end">300</text><text x="309" y="472" class="end">400</text>
      <text x="661" y="928" class="mid">Original Data</text>
      <text transform="translate(274 638) rotate(-90)" class="mid">Frequency</text>
    </g>
    <text x="661" y="374" class="ttl">Histogram of Original Data</text>

    <!-- Bar plot -->
    <rect x="1058" y="857" width="110" height="31" fill="#4e4177"/>
    <rect x="1196" y="660" width="110" height="228" fill="#3e667f"/>
    <rect x="1333.500" y="407" width="110" height="481" fill="#2e837c"/>
    <rect x="1471" y="629.500" width="110" height="258.500" fill="#46a978"/>
    <rect x="1608" y="832.500" width="110" height="55.500" fill="#8ec559"/>
    <rect class="spine" x="1045.500" y="383.500" width="687" height="504.500"/>
    <path class="tick" d="M1113 888v5M1251 888v5M1388.500 888v5M1526 888v5M1663 888v5M1040 888h5M1040 782.700h5M1040 677.400h5M1040 572h5M1040 466.700h5"/>
    <g class="lbl">
      <text x="1113" y="908" class="mid">Bin1</text><text x="1251" y="908" class="mid">Bin2</text><text x="1388.500" y="908" class="mid">Bin3</text><text x="1526" y="908" class="mid">Bin4</text><text x="1663" y="908" class="mid">Bin5</text>
      <text x="1389" y="928" class="mid">Discretized Data</text>
      <text transform="translate(1031 636) rotate(-90)" class="mid">Count</text>
    </g>
    <text x="1389" y="374" class="ttl">Bar Plot of Discretized Data</text>
  </svg>
  <div class="fig-tools">
    <svg viewBox="0 0 22 17" width="22" height="17"><path d="M11 0l4 3.500V1h3v5l4 4h-3v7h-5v-5H8v5H3v-7H0z"/></svg>
    <svg class="hatched" viewBox="0 0 20 18" width="20" height="18"><path d="M9 0v5h11v8H9v5L0 9z"/></svg>
    <svg class="hatched" viewBox="0 0 20 18" width="20" height="18"><path d="M11 0v5H0v8h11v5l9-9z"/></svg>
    <i class="fig-sep"></i>
    <svg viewBox="0 0 22 22" width="22" height="22"><path d="M11 0l4 4h-3v6h6V7l4 4-4 4v-3h-6v6h3l-4 4-4-4h3v-6H4v3l-4-4 4-4v3h6V4H7z"/></svg>
    <svg viewBox="0 0 21 21" width="21" height="21"><circle cx="8.500" cy="8.500" r="6.800" fill="none" stroke="#000" stroke-width="3"/><path stroke="#000" stroke-width="3.600" d="M13 13l7 7"/></svg>
    <svg viewBox="0 0 19 18" width="19" height="18"><path stroke="#000" stroke-width="1.600" d="M0 3h19M0 9h19M0 15h19"/><rect x="4" y="0" width="4" height="6"/><rect x="11" y="6" width="4" height="6"/><rect x="5" y="12" width="4" height="6"/></svg>
    <i class="fig-sep"></i>
    <svg viewBox="0 0 20 20" width="20" height="20"><path fill="#fff" stroke="#000" stroke-width="1.800" d="M1 1h14l4 4v14H1z"/><path fill="none" stroke="#000" stroke-width="1.800" d="M5 1v6h9V1M4 19v-7h12v7"/><rect x="10" y="2" width="2.500" height="4"/></svg>
  </div>
</div>
</body>
</html>
```

FILE: styles.css
```css
*{box-sizing:border-box}
html,body{margin:0;padding:0}
body{width:1920px;height:1080px;overflow:hidden;position:relative;display:flex;flex-direction:column;background:#3c3f41;color:#b4b6b8;font-family:"Noto Sans","Noto Sans CJK SC",sans-serif;font-size:12.5px;line-height:1}
.defs{position:absolute}
svg{display:block;flex:none}
i{font-style:normal}

/* menu */
.menubar{height:29px;flex:none;display:flex;align-items:center;border-bottom:1px solid #555759;padding-left:7px}
.pc-t{font:bold 7.5px "Noto Sans",sans-serif;fill:#fff}
.menu{display:flex;gap:14.1px;margin-left:12px;font-size:12px}
.menu u{text-underline-offset:1px}
.app-title{margin-left:27px;color:#787a7c;font-size:12px}
.winctl{margin-left:auto;display:flex;gap:35px;padding-right:17px}

/* nav */
.navbar{height:29px;flex:none;display:flex;align-items:center;padding-left:12px;border-bottom:1px solid #323436;font-size:12.5px}
.crumb-root{font-size:12.3px;color:#bbbdbf}
.crumb-sep{margin:0 8px 0 3px}
.crumb-sep.sep2{margin:0 7px 0 3px}
.crumb-file{margin-left:2px}
.ficon{width:14px;height:14px}
.ficon.tall{height:16px}
.nav-right{margin-left:auto;display:flex;align-items:center;gap:10px;padding-right:7px}
.nav-sep{width:1px;height:20px;background:#515355;margin:0 1px}
.runcfg{width:96px;height:22px;border:1px solid #5e6163;border-radius:3px;display:flex;align-items:center;gap:5px;padding-left:9px;margin:0 2px 0 -4px}
.tool-bug{margin-left:1px}
.tiny-arrow{margin-left:-6px}
.stop{display:block;width:10px;height:12px;background:#c75450;flex:none}

/* workspace */
.workspace{height:931px;flex:none;display:flex}
.rail-left{width:21px;flex:none;display:flex;flex-direction:column;align-items:center;border-right:1px solid #323436;color:#a9abad;font-size:11.5px}
.rail-active{width:100%;height:56px;background:#2d2f31;display:flex;flex-direction:column;align-items:center;gap:4px;padding:8px 0 0 3px}
.rail-item{display:flex;flex-direction:column;align-items:center;gap:5px;margin-top:9px;padding-left:3px}
.rail-bottom{margin-top:auto;padding-bottom:13px}
.rail-bm{margin-top:22px}
.vt{writing-mode:vertical-rl;transform:rotate(180deg)}
.rail-right{width:20px;flex:none;display:flex;flex-direction:column;align-items:center;padding-top:9px;font-size:11.5px;color:#a9abad;background:#3c3f41}
.vtr{writing-mode:vertical-rl;margin-top:3px}
.sci-ico{margin-top:21px}
.sci{margin-top:7px}

.center{flex:1;min-width:0;display:flex;flex-direction:column}
.upper{height:723px;flex:none;display:flex}

/* project */
.project{width:480px;flex:none;display:flex;flex-direction:column;overflow:hidden}
.proj-head{height:27px;flex:none;display:flex;align-items:center;padding-left:14px;border-bottom:1px solid #323436}
.proj-label{margin-left:5px;font-size:12.5px}
.proj-tri{margin-left:13px}
.proj-tools{margin-left:auto;display:flex;align-items:center;gap:12px;padding-right:6px}
.proj-tools .nav-sep{margin:0 -3px}
.tree{flex:1;min-height:0}
.row{height:20px;display:flex;align-items:center;white-space:nowrap;overflow:hidden}
.row b{font-size:12.3px;color:#bbbdbf}
.row .path{color:#6e7072;margin-left:6px;font-size:12px}
.chev{width:12px;height:12px;margin-right:8px}
.row .ficon{margin-right:4px}
.row .ficon.tall{margin-right:2px}
.tight{letter-spacing:-.25px}
.l0{padding-left:6px}
.l1{padding-left:24px}
.l1b{padding-left:46px}
.l2{padding-left:64px}
.nochev{padding-left:26px}
.selected{background:#0d293e;color:#c8cacc}
.library{background:#504b42}
.hscroll{height:8px;margin:0 0 2px 2px;background:#4c4e50;flex:none}

/* editor */
.editor{flex:1;min-width:0;display:flex;flex-direction:column;border-left:1px solid #323436}
.tabs{height:27px;flex:none;display:flex;align-items:stretch;padding-left:10px;padding-top:1px;border-bottom:1px solid #323436;position:relative}
.tab{display:flex;align-items:center;gap:3px;padding:0 6px 0 1px;margin-right:11px}
.tab.active{background:#4b4f52;box-shadow:inset 0 -3px 0 #9a9ea2;padding:0 7px 0 11px;margin:0 10px 0 -9px}
.tab-x{width:10px;height:10px;margin-left:2px}
.kebab{position:absolute;right:11px;top:6px}
.edit-body{flex:1;min-height:0;position:relative;display:flex;background:#2b2b2b;overflow:hidden}
.gutter{width:59px;flex:none;background:#313335;border-right:1px solid #555759;font:11.5px "DejaVu Sans Mono",monospace;color:#606366;text-align:right;padding:1px 39px 0 0}
.gutter div{height:22px;line-height:22px;position:relative}
.fold{position:absolute;left:54px;top:5px;width:9px;height:12px}
.code{font:13.2px/22px "DejaVu Sans Mono","Noto Sans CJK SC",monospace;color:#a9b7c6;padding:1px 0 0 6px}
.code div{height:22px;white-space:pre}
.code em{font-style:normal;color:#cc7832}
.code .fn{color:#ffc66d}
.code .num{color:#6897bb}
.code .c{color:#808080}
.guide{position:absolute;left:1024px;top:0;bottom:0;width:1px;background:#3f4143}
.caret-row{position:absolute;left:0;right:0;top:374px;height:22px;background:#323232}
.code,.gutter{position:relative;z-index:1}
.vscroll{position:absolute;right:0;top:27px;height:424px;width:10px;background:#4a4c4d;z-index:2}
.mark-g{position:absolute;right:0;top:265px;width:15px;height:2px;background:#2c6b2f;z-index:3}
.mark-o{position:absolute;right:0;top:307px;width:15px;height:2px;background:#c0902b;z-index:3}
.inspect{position:absolute;right:7px;top:7px;display:flex;align-items:center;gap:4px;color:#8f9193;font-size:12.5px;z-index:4}
.chk{margin-left:3px}
.arr{margin-left:7px}

/* run */
.run{flex:1;min-height:0;display:flex;flex-direction:column}
.run-head{height:27px;flex:none;display:flex;align-items:center;padding-left:7px;border-bottom:1px solid #323436;border-top:1px solid #323436}
.run-label{font-size:12.5px;width:34px}
.run-tab{height:26px;width:98px;display:flex;align-items:center;gap:5px;padding-left:13px;margin-left:0;box-shadow:inset 0 -3px 0 #6e7173}
.run-tools{margin-left:auto;display:flex;gap:12px;padding-right:7px}
.run-body{flex:1;min-height:0;display:flex}
.run-strip{flex:none;display:flex;flex-direction:column;align-items:center;border-right:1px solid #323436}
.s1{width:29px;padding-top:7px;gap:10px}
.strip-sep{width:20px;height:1px;background:#515355;flex:none}
.s1 .stop{height:11px}
.s2{width:30px;padding-top:7px;gap:12px}
.hl{width:22px;height:22px;background:#4c5052;border-radius:3px;display:flex;align-items:center;justify-content:center;margin:-4px 0}
.console{flex:1;background:#2b2b2b;color:#a9b7c6;font:13px/22px "DejaVu Sans Mono",monospace;padding:0 12px;white-space:nowrap;overflow:hidden}

/* tool windows bar */
.toolbar{height:23px;flex:none;display:flex;align-items:stretch;font-size:11.5px;padding-left:35px;border-bottom:1px solid #323436;color:#a4a6a8;border-top:1px solid #323436}
.tw{display:flex;align-items:center;gap:5px;margin-right:19px}
.tw.vc{margin-right:8px}
.tw.active{background:#2d2f31;color:#d0d2d4;padding:0 8px 0 12px;position:relative;margin-right:12px}
.dot{position:absolute;left:20px;top:14px;width:4px;height:4px;border-radius:50%;background:#2bd62b}
.tw.active span{margin-left:1px}
.tw.last{margin-left:7px}
.events{margin-left:auto;margin-right:30px}
.badge-g{width:12px;height:12px;border-radius:50%;background:#3b9b57;color:#eee;font-size:9px;display:flex;align-items:center;justify-content:center}

/* status */
.statusbar{height:20px;flex:none;display:flex;align-items:center;padding-left:6px;font-size:12.2px;color:#a4a6a8}
.st-msg{margin-left:9px}
.st-right{margin-left:auto;display:flex;align-items:center;gap:12px;padding-right:10px}

/* taskbar */
.taskbar{height:48px;flex:none;display:flex;align-items:center;padding-left:20px;color:#fff;background:linear-gradient(90deg,#234f8c 0,#2a5b9f 280px,#1a4ea4 560px,#0a3ea0 800px,#0a3d9c 1150px,#0f4294 1350px,#2a5a9b 1620px,#1f4c8b 1920px);border-top:1px solid #2a5590}
.weather{width:531px;flex:none;display:flex;align-items:center;position:relative}
.wbadge{position:absolute;left:10px;top:-8px;width:15px;height:15px;border-radius:50%;background:#c42b1c;font-size:11px;display:flex;align-items:center;justify-content:center}
.wtext{display:flex;flex-direction:column;gap:5px;margin-left:9px;font-size:11.5px}
.start{margin-right:13px}
.search{width:220px;height:32px;border-radius:16px;background:rgba(255,255,255,.15);display:flex;align-items:center;gap:14px;padding-left:11px;font-size:13px;color:#dfe6f0;margin-right:2px}
.apps{display:flex}
.app{width:44px;height:46px;display:flex;align-items:center;justify-content:center;position:relative;padding-bottom:5px}
.app::after{content:"";position:absolute;left:19px;bottom:3px;width:6px;height:3px;border-radius:2px;background:#9fb4d0}
.app.nodot::after{display:none}
.app.current{background:rgba(255,255,255,.08);border-radius:5px}
.app.current::after{left:14px;width:16px;background:#60cdff}
.q-t{font:bold 19px "Noto Sans",sans-serif;fill:#fff;text-anchor:middle}
.h-t{font:16px "Noto Sans",sans-serif;fill:#fff;text-anchor:middle}
.ai-t{font:bold 9px "Noto Sans",sans-serif;fill:#fff;text-anchor:middle}
.t-t{font:bold 20px "Liberation Serif",serif;fill:#111;text-anchor:middle}
.pc-b{font:bold 9.5px "Noto Sans",sans-serif;fill:#fff}
.tray{margin-left:auto;display:flex;align-items:center;margin-right:-2px}
.ti{width:32px;display:flex;justify-content:center;align-items:center}
.ti.tx{font-size:14px;width:36px}
.ti.wifi{width:35px}
.ti.vol{width:24px}
.clock{width:75px;padding-right:20px;box-sizing:content-box;display:flex;flex-direction:column;align-items:flex-end;gap:5px;font-size:12.5px;margin-left:-8px}

/* figure window */
.figure{position:absolute;z-index:10;left:247px;top:316px;width:1500px;height:666px;border-radius:8px;overflow:hidden;background:#fff;box-shadow:0 0 14px rgba(0,0,0,.55);display:flex;flex-direction:column;color:#111}
.fig-title{height:30px;flex:none;background:#eff3f9;display:flex;align-items:center;padding:0 0 2px 8px;font-size:11.5px;gap:4px}
.fig-ctl{margin-left:auto;display:flex;gap:35px;padding-right:18px}
.plot{flex:none}
.bars rect{fill:#c1e5f4;stroke:#000;stroke-width:1.3}
.kde{fill:none;stroke:#87ceeb;stroke-width:2.2}
.spine{fill:none;stroke:#000;stroke-width:1.1}
.tick{fill:none;stroke:#000;stroke-width:1.1}
.lbl text{font:13.9px "DejaVu Sans",sans-serif;fill:#000}
.lbl .mid{text-anchor:middle}
.lbl .end{text-anchor:end}
.ttl{font:16.7px "DejaVu Sans",sans-serif;fill:#000;text-anchor:middle}
.fig-tools{flex:1;background:#f0f0f0;display:flex;align-items:center;padding-left:5px;gap:8px}
.hatched{opacity:.55}
.fig-sep{width:1px;height:24px;background:#b0b0b0;flex:none}
```
